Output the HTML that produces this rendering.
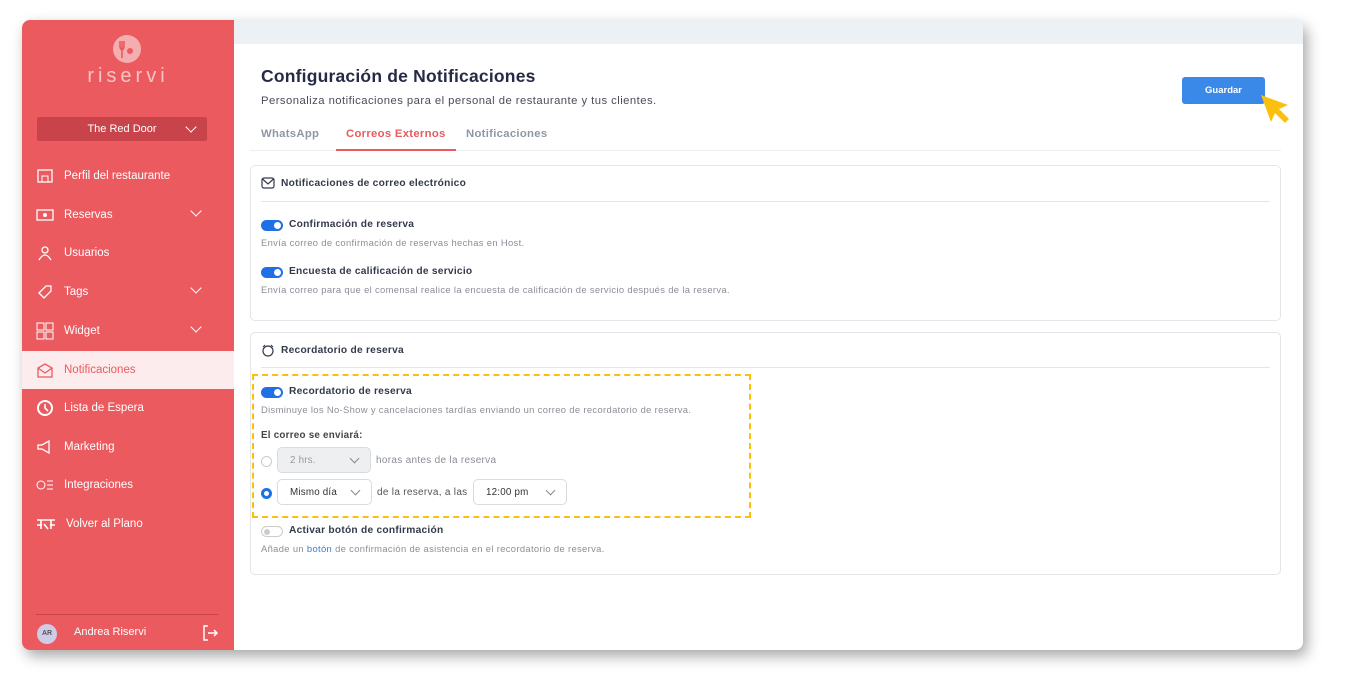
<!DOCTYPE html>
<html><head><meta charset="utf-8"><style>
*{box-sizing:border-box;margin:0;padding:0}
body{width:1345px;height:693px;background:#fff;font-family:"Liberation Sans",sans-serif;position:relative;overflow:hidden}
.win{position:absolute;left:22px;top:20px;width:1281px;height:630px;border-radius:8px;overflow:hidden;box-shadow:4px 6px 14px rgba(0,0,0,.35);background:#fff}
.side{position:absolute;left:0;top:0;width:212px;height:630px;background:#eb5a5f;color:#fff}
.a{position:absolute;white-space:nowrap}
.nav{position:absolute;left:0;width:212px;height:38px;font-size:11.5px;display:flex;align-items:center}
.nav .t{position:absolute;left:42px}
.nav svg{position:absolute;left:14px}
.chev{position:absolute;right:34px;width:8px;height:8px;border-right:1.5px solid #fff;border-bottom:1.5px solid #fff;transform:rotate(45deg);top:11px}
.main{position:absolute;left:212px;top:0;right:0;bottom:0}
.card{position:absolute;left:16px;width:1031px;border:1px solid #e3e5e8;border-radius:5px}
.tog{position:absolute;width:22px;height:11px;border-radius:6px;background:#1f6fe5}
.tog:after{content:"";position:absolute;right:2px;top:2px;width:7px;height:7px;border-radius:50%;background:#fff}
.lbl{position:absolute;font-size:10.2px;font-weight:bold;color:#333a4a;letter-spacing:.25px;white-space:nowrap}
.desc{position:absolute;font-size:9.4px;color:#8a8e96;letter-spacing:.35px;white-space:nowrap}
.sel{position:absolute;height:26px;border:1px solid #d8dbe0;border-radius:5px;font-size:9.8px;color:#333;padding:7px 12px;letter-spacing:.2px}
.sel:after{content:"";position:absolute;right:12px;top:7px;width:6px;height:6px;border-right:1px solid #888;border-bottom:1px solid #888;transform:rotate(45deg)}
</style></head><body>
<div class="win">
<div class="side">
 <svg class="a" style="left:90px;top:14px" width="30" height="30"><circle cx="15" cy="15" r="14" fill="#f5aeb0"/><path d="M10 7v9M8 7v5q0 3 2 4M12 7v5q0 3-2 4M10 16v8" stroke="#eb5a5f" stroke-width="1.6" fill="none"/><circle cx="18" cy="17" r="3" fill="#eb5a5f"/></svg>
 <div class="a" style="left:0;width:212px;top:45px;text-align:center;font-size:20px;letter-spacing:4px;color:#f6c3c4">riservi</div>
 <div class="a" style="left:15px;top:97px;width:170px;height:24px;background:#c9434a;border-radius:2px;font-size:11px;text-align:center;line-height:24px">The Red Door<span class="chev" style="right:12px;top:6px"></span></div>
 <div class="nav" style="top:137px"><svg width="18" height="16"><rect x="2" y="2" width="14" height="12" fill="none" stroke="#fff" stroke-width="1.3"/><rect x="6" y="8" width="6" height="6" fill="none" stroke="#fff"/></svg><span class="t">Perfil del restaurante</span></div>
 <div class="nav" style="top:176px"><svg width="18" height="14"><rect x="1" y="2" width="16" height="10" fill="none" stroke="#fff" stroke-width="1.3"/><circle cx="9" cy="7" r="2" fill="#fff"/></svg><span class="t">Reservas</span><span class="chev"></span></div>
 <div class="nav" style="top:214px"><svg width="18" height="16"><circle cx="9" cy="5" r="3" fill="none" stroke="#fff" stroke-width="1.3"/><path d="M3 15q6-10 12 0" fill="none" stroke="#fff" stroke-width="1.3"/></svg><span class="t">Usuarios</span></div>
 <div class="nav" style="top:253px"><svg width="18" height="16"><path d="M3 9l7-7h5v5l-7 7z" fill="none" stroke="#fff" stroke-width="1.3"/></svg><span class="t">Tags</span><span class="chev"></span></div>
 <div class="nav" style="top:292px"><svg width="18" height="18"><rect x="1" y="1" width="7" height="7" fill="none" stroke="#fff"/><rect x="10" y="1" width="7" height="7" fill="none" stroke="#fff"/><rect x="1" y="10" width="7" height="7" fill="none" stroke="#fff"/><rect x="10" y="10" width="7" height="7" fill="none" stroke="#fff"/></svg><span class="t">Widget</span><span class="chev"></span></div>
 <div class="nav" style="top:331px;background:#fdeced;color:#eb5a5f"><svg width="18" height="16"><path d="M2 6v9h14V6L9 2z M2 6l7 5 7-5" fill="none" stroke="#eb5a5f" stroke-width="1.3"/></svg><span class="t">Notificaciones</span></div>
 <div class="nav" style="top:369px"><svg width="18" height="18"><circle cx="9" cy="9" r="7" fill="none" stroke="#fff" stroke-width="2"/><path d="M9 5v4l3 3" stroke="#fff" stroke-width="1.6" fill="none"/></svg><span class="t">Lista de Espera</span></div>
 <div class="nav" style="top:408px"><svg width="18" height="16"><path d="M2 6h4l7-4v12l-7-4H2z" fill="none" stroke="#fff" stroke-width="1.3"/></svg><span class="t">Marketing</span></div>
 <div class="nav" style="top:446px"><svg width="18" height="14"><circle cx="5" cy="7" r="4" fill="none" stroke="#fff"/><path d="M11 3h6M11 7h6M11 11h6" stroke="#fff"/></svg><span class="t">Integraciones</span></div>
 <div class="nav" style="top:485px"><svg width="20" height="14"><path d="M1 3h18M5 3v9M15 3v9M1 8h5M14 8h5M8 7l4 5" stroke="#fff" stroke-width="1.6" fill="none"/></svg><span class="t" style="left:44px">Volver al Plano</span></div>
 <div class="a" style="left:14px;top:594px;width:182px;border-top:1px solid #c9434a"></div>
 <div class="a" style="left:15px;top:604px;width:20px;height:20px;border-radius:50%;background:#cfcce8;color:#555;font-size:7px;font-weight:bold;text-align:center;line-height:20px">AR</div>
 <div class="a" style="left:52px;top:606px;font-size:11px">Andrea Riservi</div>
 <svg class="a" style="left:180px;top:604px" width="16" height="18"><path d="M6 2H2v14h4M6 9h9M12 6l3 3-3 3" stroke="#fff" stroke-width="1.5" fill="none"/></svg>
</div>
<div class="main">
 <div class="a" style="left:0;top:0;right:0;height:24px;background:#eef1f3"></div>
 <div class="a" style="left:27px;top:46px;font-size:17.5px;font-weight:bold;color:#262b45;letter-spacing:.2px">Configuración de Notificaciones</div>
 <div class="a" style="left:27px;top:75px;font-size:11.3px;color:#4e4a5a;letter-spacing:.45px">Personaliza notificaciones para el personal de restaurante y tus clientes.</div>
 <div class="a" style="left:948px;top:57px;width:83px;height:27px;background:#3a88e8;border-radius:3px;color:#fff;font-size:9.5px;font-weight:bold;text-align:center;line-height:27px">Guardar</div>
 <svg class="a" style="left:1024px;top:72px" width="36" height="36"><path d="M3 3l27 10-9 4 10 10-4 4-10-10-4 9z" fill="#fbbf0e"/></svg>
 <div class="a" style="left:16px;top:130px;width:1031px;border-top:1px solid #eceef0"></div>
 <div class="a" style="left:27px;top:108px;font-size:11.3px;font-weight:bold;color:#8e97a6;letter-spacing:.3px">WhatsApp</div>
 <div class="a" style="left:112px;top:108px;font-size:11.3px;font-weight:bold;color:#e75a5e;letter-spacing:.3px">Correos Externos</div>
 <div class="a" style="left:102px;top:129px;width:120px;height:2px;background:#e75a5e"></div>
 <div class="a" style="left:232px;top:108px;font-size:11.3px;font-weight:bold;color:#8e97a6;letter-spacing:.3px">Notificaciones</div>

 <div class="card" style="top:145px;height:156px">
  <svg class="a" style="left:10px;top:11px" width="14" height="12"><rect x="1" y="1" width="12" height="10" rx="2" fill="none" stroke="#333a4a" stroke-width="1.2"/><path d="M1.5 2l5.5 5 5.5-5" stroke="#333a4a" fill="none" stroke-width="1.2"/></svg>
  <div class="lbl" style="left:30px;top:12px">Notificaciones de correo electrónico</div>
  <div class="a" style="left:10px;right:10px;top:35px;border-top:1px solid #e3e5e8"></div>
  <div class="tog" style="left:10px;top:54px"></div><div class="lbl" style="left:38px;top:53px">Confirmación de reserva</div>
  <div class="desc" style="left:10px;top:71px">Envía correo de confirmación de reservas hechas en Host.</div>
  <div class="tog" style="left:10px;top:101px"></div><div class="lbl" style="left:38px;top:100px">Encuesta de calificación de servicio</div>
  <div class="desc" style="left:10px;top:118px">Envía correo para que el comensal realice la encuesta de calificación de servicio después de la reserva.</div>
 </div>

 <div class="card" style="top:312px;height:243px">
  <svg class="a" style="left:10px;top:11px" width="14" height="14"><circle cx="7" cy="7" r="5" fill="none" stroke="#333a4a" stroke-width="1.2"/><path d="M2 3l2-2M12 3l-2-2" stroke="#333a4a"/></svg>
  <div class="lbl" style="left:30px;top:12px">Recordatorio de reserva</div>
  <div class="a" style="left:10px;right:10px;top:34px;border-top:1px solid #e3e5e8"></div>
  <div class="tog" style="left:10px;top:54px"></div><div class="lbl" style="left:38px;top:53px">Recordatorio de reserva</div>
  <div class="desc" style="left:10px;top:71px">Disminuye los No-Show y cancelaciones tardías enviando un correo de recordatorio de reserva.</div>
  <div class="lbl" style="left:10px;top:97px;font-size:9.8px;color:#444">El correo se enviará:</div>
  <div class="a" style="left:10px;top:123px;width:11px;height:11px;border-radius:50%;border:1px solid #ccc"></div>
  <div class="sel" style="left:26px;top:114px;width:94px;background:#eeeff1;color:#999">2 hrs.</div>
  <div class="desc" style="left:125px;top:122px;font-size:10px;letter-spacing:.3px">horas antes de la reserva</div>
  <div class="a" style="left:10px;top:155px;width:11px;height:11px;border-radius:50%;border:3px solid #1f6fe5"></div>
  <div class="sel" style="left:26px;top:146px;width:95px">Mismo día</div>
  <div class="desc" style="left:126px;top:154px;font-size:10px;color:#555;letter-spacing:.3px">de la reserva, a las</div>
  <div class="sel" style="left:222px;top:146px;width:94px">12:00 pm</div>
  <div class="a" style="left:1px;top:41px;width:499px;height:144px;border:2.5px dashed #fbbf0e"></div>
  <div class="tog" style="left:10px;top:193px;background:#fff;border:1px solid #ccc"></div>
  <div class="a" style="left:13px;top:196px;width:6px;height:6px;border-radius:50%;background:#ccc"></div>
  <div class="lbl" style="left:38px;top:192px">Activar botón de confirmación</div>
  <div class="desc" style="left:10px;top:210px">Añade un <span style="color:#3a7ad8">botón</span> de confirmación de asistencia en el recordatorio de reserva.</div>
 </div>
</div>
</div>
</body></html>
